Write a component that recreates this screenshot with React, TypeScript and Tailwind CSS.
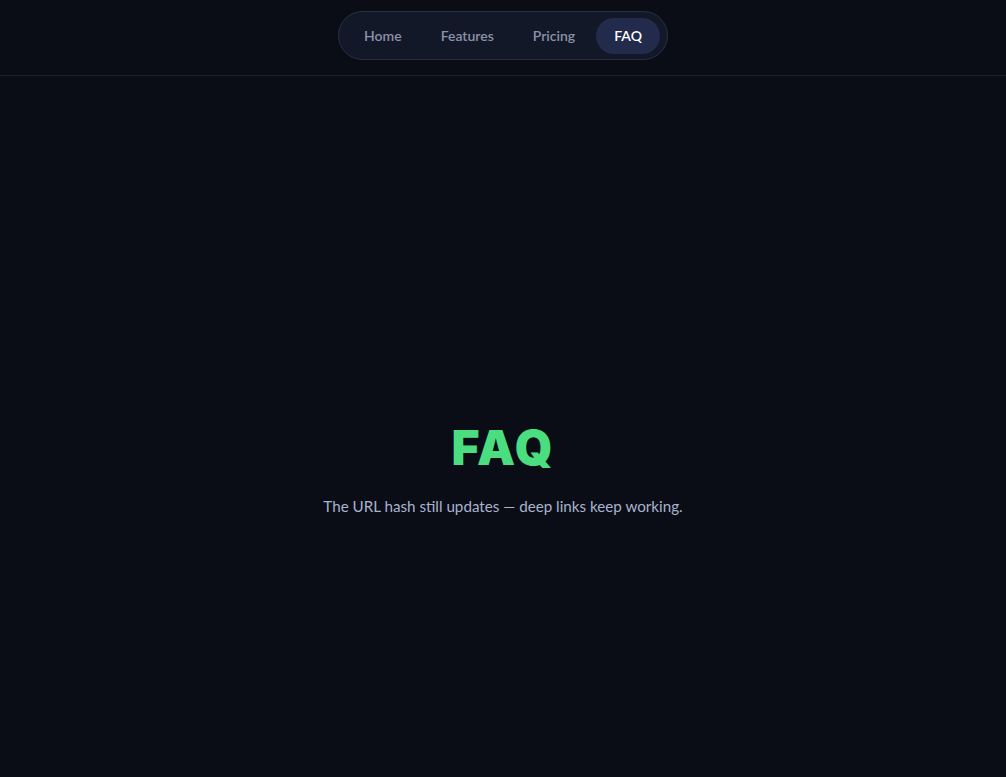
import { useState } from "react";

const links = ["Home", "Features", "Pricing", "FAQ"];

export default function App() {
  const [active, setActive] = useState("FAQ");

  return (
    <div
      className="flex min-h-screen flex-col bg-[#0a0d16]"
      style={{ fontFamily: "Lato, 'Noto Sans', sans-serif" }}
    >
      {/* Top nav */}
      <header className="flex h-[76px] shrink-0 justify-center border-b border-[#1a1f2c] pt-[11px]">
        <nav className="flex h-[49px] items-center gap-[3px] rounded-full border border-[#2a3043] bg-[#131829] px-[7px]">
          {links.map((name) => {
            const isActive = name === active;
            return (
              <button
                key={name}
                onClick={() => setActive(name)}
                className={`h-9 rounded-full px-[18px] text-sm font-semibold ${
                  isActive
                    ? "bg-[#232b4c] font-bold text-white"
                    : "text-[#8b91a7]"
                }`}
              >
                {name}
              </button>
            );
          })}
        </nav>
      </header>

      {/* Section */}
      <main className="flex flex-col items-center pt-[348px]">
        <h1 className="font-['Inter',sans-serif] text-5xl font-black leading-none tracking-[0.04em] text-[#4ade80]">
          FAQ
        </h1>
        <p className="mt-[23px] text-[15.2px] text-[#a8b3cf]">
          The URL hash still updates — deep links keep working.
        </p>
      </main>
    </div>
  );
}
